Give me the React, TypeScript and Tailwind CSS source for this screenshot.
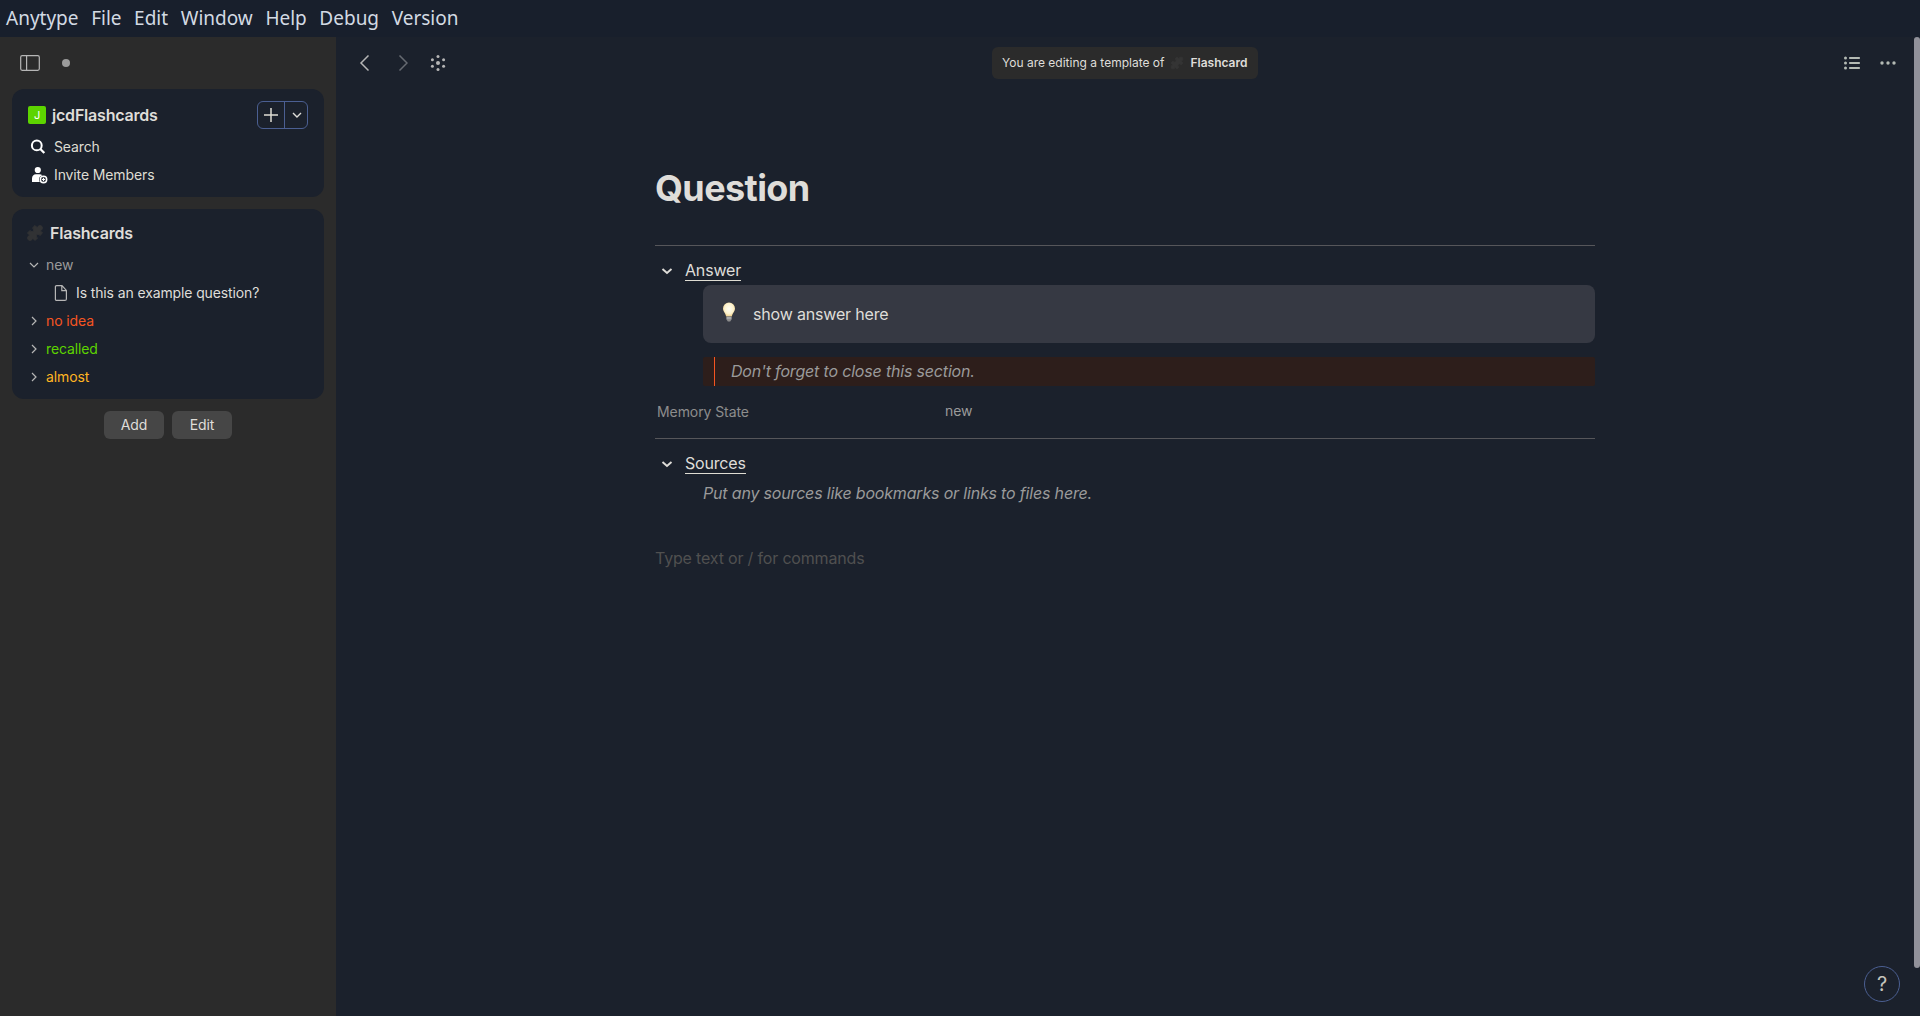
import React from "react";

const MENU = ["Anytype", "File", "Edit", "Window", "Help", "Debug", "Version"];

const GROUPS = [
  { name: "no idea", color: "text-[#f55522]" },
  { name: "recalled", color: "text-[#5dd400]" },
  { name: "almost", color: "text-[#ffb522]" },
];

function Puzzle({ className }: { className: string }) {
  return (
    <svg viewBox="0 0 20 20" className={className} fill="currentColor">
      <path d="M10 2.500L12.600 5.100A2.400 2.400 0 1 1 14.900 7.400L17.500 10L14.900 12.600A1.900 1.900 0 1 0 12.600 14.900L10 17.500L7.400 14.900A2.400 2.400 0 1 1 5.100 12.600L2.500 10L5.100 7.400A1.900 1.900 0 1 0 7.400 5.100Z" stroke="currentColor" strokeWidth="1" strokeLinejoin="round" />
    </svg>
  );
}

function Chevron({ className, d, w = 1.4 }: { className: string; d: string; w?: number }) {
  return (
    <svg viewBox="0 0 20 20" className={className} fill="none" stroke="currentColor" strokeWidth={w}>
      <path d={d} />
    </svg>
  );
}

function Bulb() {
  return (
    <svg viewBox="0 0 20 20" className="size-5">
      <defs>
        <radialGradient id="bulb" cx="0.5" cy="0.45" r="0.6">
          <stop offset="0" stopColor="#fffef4" />
          <stop offset="0.6" stopColor="#fdf3cf" />
          <stop offset="1" stopColor="#eec97c" />
        </radialGradient>
      </defs>
      <path d="M10 .4a6 6 0 0 0-6 6c0 3 2.300 4.200 3.200 8h5.600c.9-3.800 3.200-5 3.200-8a6 6 0 0 0-6-6z" fill="url(#bulb)" />
      <path d="M7.500 14.400h5v3.200l-1.300 1.800H8.800l-1.300-1.800z" fill="#8d8d8d" />
      <path d="M7.500 16h5" stroke="#c4c4c4" strokeWidth="1" />
    </svg>
  );
}

function Sidebar() {
  return (
    <aside className="flex w-[336px] shrink-0 flex-col bg-[#2b2b2b] px-3 tracking-[-0.12px]">
      <div className="flex h-13 items-center pl-2">
        <svg viewBox="0 0 20 16" className="h-4 w-5" fill="none" stroke="#b6b6b6" strokeWidth="1.2">
          <rect x="0.700" y="0.700" width="18.600" height="14.600" rx="1.500" />
          <path d="M6.600 1v14" />
        </svg>
        <span className="ml-[22px] size-2 rounded-full bg-[#9b9b9b]" />
      </div>

      <section className="h-[108px] rounded-xl bg-[#1b212c] px-4 pt-3">
        <div className="flex h-7 items-center">
          <span className="flex size-[18px] items-center justify-center rounded-[2px] bg-[#5dd400] text-[11px] text-white">J</span>
          <span className="ml-1.5 text-[16px] font-semibold tracking-[-0.2px]">jcdFlashcards</span>
          <div className="ml-auto flex h-7 w-[51px] rounded-md border border-[#4b5f92]">
            <div className="flex w-[27px] items-center justify-center border-r border-[#4b5f92]">
              <svg viewBox="0 0 14 14" className="size-3.5" stroke="#dfddd3" strokeWidth="1.500">
                <path d="M7 0v14M0 7h14" />
              </svg>
            </div>
            <div className="flex flex-1 items-center justify-center pl-px">
              <Chevron className="size-5 shrink-0" d="M6 8l4 4 4-4" />
            </div>
          </div>
        </div>
        <div className="mt-1 flex h-7 items-center text-sm text-[#dfddd3]">
          <svg viewBox="0 0 16 16" className="ml-[2px] size-4" fill="none" stroke="#fff" strokeWidth="2">
            <circle cx="6.800" cy="6.400" r="4.900" />
            <path d="M10.300 10l4 4" strokeWidth="2.300" />
          </svg>
          <span className="ml-2">Search</span>
        </div>
        <div className="flex h-7 items-center text-sm text-[#dfddd3]">
          <svg viewBox="0 0 18 18" className="ml-[3px] size-[18px]" fill="#fff">
            <circle cx="6.800" cy="4" r="3.100" />
            <path d="M1 16v-3.500c0-2.500 1.600-4.300 4-4.300h3.500c1.200 0 2 .4 2.800 1A4.700 4.700 0 0 0 8 13.500c0 1 .3 1.800.8 2.500z" />
            <circle cx="12.500" cy="13.500" r="3.200" fill="none" stroke="#fff" strokeWidth="1.500" />
            <path d="M12.500 11.800v3.400M10.800 13.500h3.400" stroke="#fff" strokeWidth="1.200" />
          </svg>
          <span className="ml-[5px]">Invite Members</span>
        </div>
      </section>

      <section className="mt-3 h-[190px] rounded-xl bg-[#1b212c] px-4 pt-2.5 text-sm">
        <div className="flex h-7 items-center">
          <Puzzle className="-ml-[3px] size-5 text-[#313234]" />
          <span className="ml-[5px] text-[16px] font-semibold tracking-[-0.2px]">Flashcards</span>
        </div>
        <div className="mt-1 flex h-7 items-center text-[#9a9a9a]">
          <Chevron className="-ml-1 size-5 text-[#b6b6b6]" d="M6 8l4 4 4-4" w={1.2} />
          <span className="ml-[2px]">new</span>
        </div>
        <div className="flex h-7 items-center">
          <svg viewBox="0 0 14 18" className="ml-[26px] h-[18px] w-3.5" fill="none" stroke="#b6b6b6" strokeWidth="1.200">
            <path d="M2.600 1.600H8L12.400 6.400v8.500a1.500 1.500 0 0 1-1.500 1.500H2.600a1.200 1.200 0 0 1-1.200-1.200V2.800a1.200 1.200 0 0 1 1.200-1.200zM7.800 1.800v4.800h4.600" />
          </svg>
          <span className="ml-2">Is this an example question?</span>
        </div>
        {GROUPS.map((g) => (
          <div key={g.name} className="flex h-7 items-center">
            <Chevron className="-ml-1 size-5 text-[#b6b6b6]" d="M8 6l4 4-4 4" w={1.2} />
            <span className={`ml-[2px] ${g.color}`}>{g.name}</span>
          </div>
        ))}
      </section>

      <div className="mt-3 flex justify-center gap-2 text-sm">
        <button className="h-7 w-15 rounded-md bg-[#464646]">Add</button>
        <button className="h-7 w-15 rounded-md bg-[#464646]">Edit</button>
      </div>
    </aside>
  );
}

function Toggle({ label }: { label: string }) {
  return (
    <div className="flex h-[29px] items-center">
      <Chevron className="ml-[2px] size-5" d="M5.500 8l4.500 4 4.500-4" w={1.9} />
      <span className="mt-px ml-2 border-b border-[#dfddd3] leading-[19px]">{label}</span>
    </div>
  );
}

function Toolbar() {
  return (
    <div className="flex h-13 items-center pr-[24px] pl-[23px]">
      <div className="flex flex-1 items-center text-[#b6b6b6]">
        <svg viewBox="0 0 10 16" className="h-4 w-2.5" fill="none" stroke="currentColor" strokeWidth="1.500">
          <path d="M9.500 .5L2 8l7.500 7.500" />
        </svg>
        <svg viewBox="0 0 10 16" className="ml-[29px] h-4 w-2.5 text-[#666a71]" fill="none" stroke="currentColor" strokeWidth="1.500">
          <path d="M1.500 .5L9 8l-7.500 7.500" />
        </svg>
        <svg viewBox="0 0 20 20" className="ml-5 size-5" fill="currentColor">
          <circle cx="10" cy="10" r="2" />
          <circle cx="10" cy="3.500" r="1.500" />
          <circle cx="10" cy="16.500" r="1.500" />
          <circle cx="4.400" cy="6.800" r="1.500" />
          <circle cx="15.600" cy="6.800" r="1.500" />
          <circle cx="4.400" cy="13.200" r="1.500" />
          <circle cx="15.600" cy="13.200" r="1.500" />
        </svg>
      </div>
      <div className="mr-[5px] flex h-8 w-[266px] shrink-0 items-center rounded-md bg-[#2b2b2b] pl-2.5 text-xs">
        <span>You are editing a template of</span>
        <Puzzle className="ml-[5px] size-4 text-[#343434]" />
        <span className="ml-[5px] font-semibold">Flashcard</span>
      </div>
      <div className="flex flex-1 items-center justify-end">
        <svg viewBox="0 0 16 14" className="h-3.5 w-4" fill="#b4bab4">
          {[2, 7, 12].map((y) => (
            <g key={y}>
              <circle cx="1.500" cy={y} r="1.500" />
              <rect x="5" y={y - 1} width="11" height="2" rx="0.800" />
            </g>
          ))}
        </svg>
        <svg viewBox="0 0 16 4" className="ml-5 h-1 w-4" fill="#b4bab4">
          <circle cx="2" cy="2" r="1.700" />
          <circle cx="8" cy="2" r="1.700" />
          <circle cx="14" cy="2" r="1.700" />
        </svg>
      </div>
    </div>
  );
}

export default function App() {
  return (
    <div className="relative flex h-[1016px] w-[1920px] flex-col overflow-hidden bg-[#1b212c] font-['Inter',sans-serif] text-[#dfddd9]">
      <nav className="flex h-[37px] shrink-0 items-center gap-[12.6px] bg-[#181f2c] pb-px pl-1.5 font-['Noto_Sans',sans-serif] text-[19px] text-[#d3dae3]">
        {MENU.map((m) => (
          <span key={m}>{m}</span>
        ))}
      </nav>
      <div className="flex min-h-0 flex-1">
        <Sidebar />
        <main className="min-w-0 flex-1">
          <Toolbar />
          <article className="ml-[319px] w-[940px] pt-[75px] tracking-[-0.176px]">
            <h1 className="text-[36px] leading-12 font-bold tracking-[-0.6px]">Question</h1>
            <hr className="mt-[33px] border-[#56565a]" />
            <div className="mt-[10px]">
              <Toggle label="Answer" />
            </div>
            <div className="ml-12 flex h-[58px] items-center rounded-lg bg-[#363943] pl-4">
              <div className="-mt-1"><Bulb /></div>
              <span className="ml-[14px]">show answer here</span>
            </div>
            <div className="mt-[14px] ml-12 flex h-[29px] items-stretch rounded-[2px] bg-[#2d1e1b] pl-[11px]">
              <div className="w-px bg-[#f55522]" />
              <span className="ml-4 leading-[29px] text-[#9a9a9a] italic">Don't forget to close this section.</span>
            </div>
            <div className="mt-3 flex h-7 items-center pl-[2px] text-sm tracking-[-0.08px] text-[#8d8d8d]">
              <span className="w-[288px]">Memory State</span>
              <span className="-mt-0.5 text-[#9a9a9a]">new</span>
            </div>
            <hr className="mt-3 border-[#56565a]" />
            <div className="mt-[10px]">
              <Toggle label="Sources" />
            </div>
            <p className="ml-12 leading-[30px] text-[#9a9a9a] italic">Put any sources like bookmarks or links to files here.</p>
            <p className="mt-[35px] leading-[30px] text-[#505050]">Type text or / for commands</p>
          </article>
        </main>
      </div>
      <div className="absolute top-[37px] right-0 h-[931px] w-1.5 rounded-full bg-[#91919a]" />
      <div className="absolute top-[966px] left-[1864px] flex size-9 items-center justify-center rounded-full border border-[#4b5f92] text-[20px] text-[#c4c4bc]">?</div>
    </div>
  );
}
